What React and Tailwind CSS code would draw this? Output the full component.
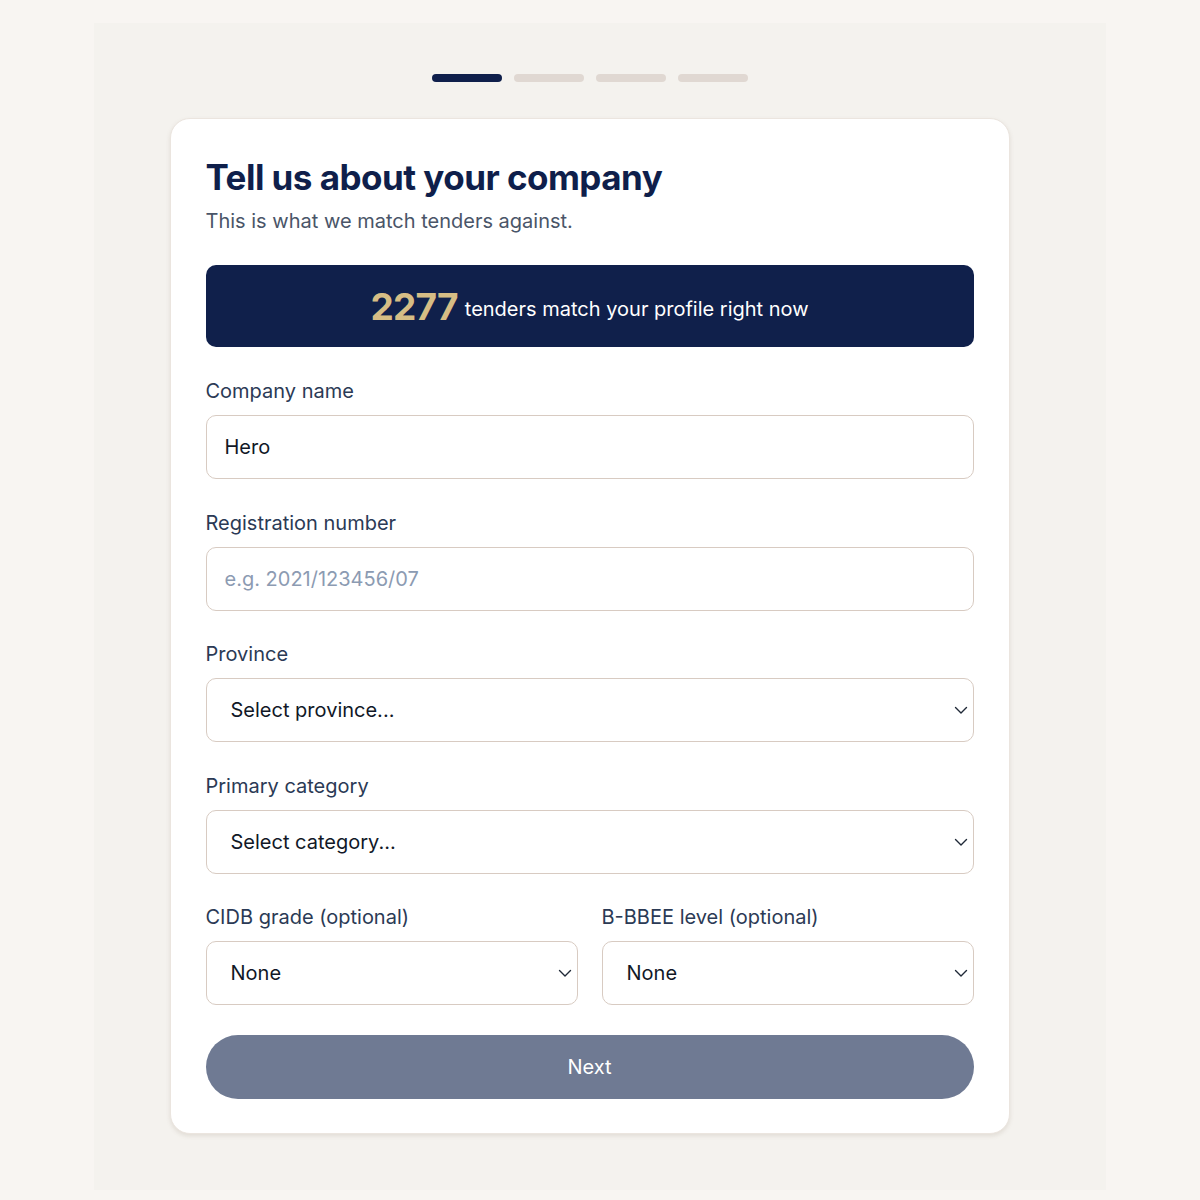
import React from 'react';

const font = { fontFamily: 'Inter, "Noto Sans", sans-serif' };

const Chevron = () => (
  <svg
    className="pointer-events-none absolute right-[5px] top-1/2 -translate-y-1/2"
    width="16"
    height="16"
    viewBox="0 0 16 16"
    fill="none"
    stroke="#1f2937"
    strokeWidth="1.4"
    strokeLinecap="round"
    strokeLinejoin="round"
  >
    <path d="M2.5 5.5L8 11l5.5-5.5" />
  </svg>
);

const Field = ({ label, children }) => (
  <div className="flex flex-col">
    <label className="mb-3 text-[20px] leading-6 text-[#2b3a55]">{label}</label>
    {children}
  </div>
);

const TextInput = ({ value, placeholder }) => (
  <input
    defaultValue={value}
    placeholder={placeholder}
    className="h-16 w-full rounded-[10px] border border-[#d8cbc2] bg-white px-[18px] text-[20px] text-[#111827] outline-none placeholder:text-[#8c9bb2]"
  />
);

const Select = ({ value }) => (
  <div className="relative">
    <select
      defaultValue={value}
      className="h-16 w-full appearance-none rounded-[10px] border border-[#d8cbc2] bg-white pl-6 pr-10 text-[20px] text-[#111827] outline-none"
    >
      <option>{value}</option>
    </select>
    <Chevron />
  </div>
);

export default function App() {
  return (
    <div className="min-h-[1200px] bg-[#f8f5f2] px-[94px] pt-[23px] pb-[10px]" style={font}>
      <div className="flex min-h-[1167px] flex-col items-center bg-[#f4f2ee] pt-[51px] pr-[21px]">
        <div className="flex gap-3">
          <div className="h-2 w-[70px] rounded-full bg-[#0f1f4b]" />
          <div className="h-2 w-[70px] rounded-full bg-[#e0d8d2]" />
          <div className="h-2 w-[70px] rounded-full bg-[#e0d8d2]" />
          <div className="h-2 w-[70px] rounded-full bg-[#e0d8d2]" />
        </div>

        <div className="mt-9 w-[840px] rounded-[20px] border border-[#ebe5df] bg-white px-[35px] pt-[36px] pb-[34px] shadow-[0_2px_4px_rgba(120,100,80,0.15)]">
          <h1 className="text-[35px] font-bold leading-[44px] tracking-[-0.015em] text-[#0f1f4b]">
            Tell us about your company
          </h1>
          <p className="mt-2 text-[20px] leading-7 text-[#4a5568]">This is what we match tenders against.</p>

          <div className="mt-[30px] flex h-[82px] items-center justify-center gap-[7px] rounded-[10px] bg-[#10204b]">
            <span className="text-[37px] font-bold leading-none tracking-[-0.02em] text-[#d6bd85]">2277</span>
            <span className="mt-[6px] text-[20px] text-white">tenders match your profile right now</span>
          </div>

          <div className="mt-8 flex flex-col gap-[31.5px]">
            <Field label="Company name">
              <TextInput value="Hero" />
            </Field>
            <Field label="Registration number">
              <TextInput placeholder="e.g. 2021/123456/07" />
            </Field>
            <Field label="Province">
              <Select value="Select province..." />
            </Field>
            <Field label="Primary category">
              <Select value="Select category..." />
            </Field>
            <div className="grid grid-cols-2 gap-6">
              <Field label="CIDB grade (optional)">
                <Select value="None" />
              </Field>
              <Field label="B-BBEE level (optional)">
                <Select value="None" />
              </Field>
            </div>
          </div>

          <button className="mt-[30px] h-16 w-full rounded-full bg-[#6f7a93] text-[20px] text-white">
            Next
          </button>
        </div>
      </div>
    </div>
  );
}
